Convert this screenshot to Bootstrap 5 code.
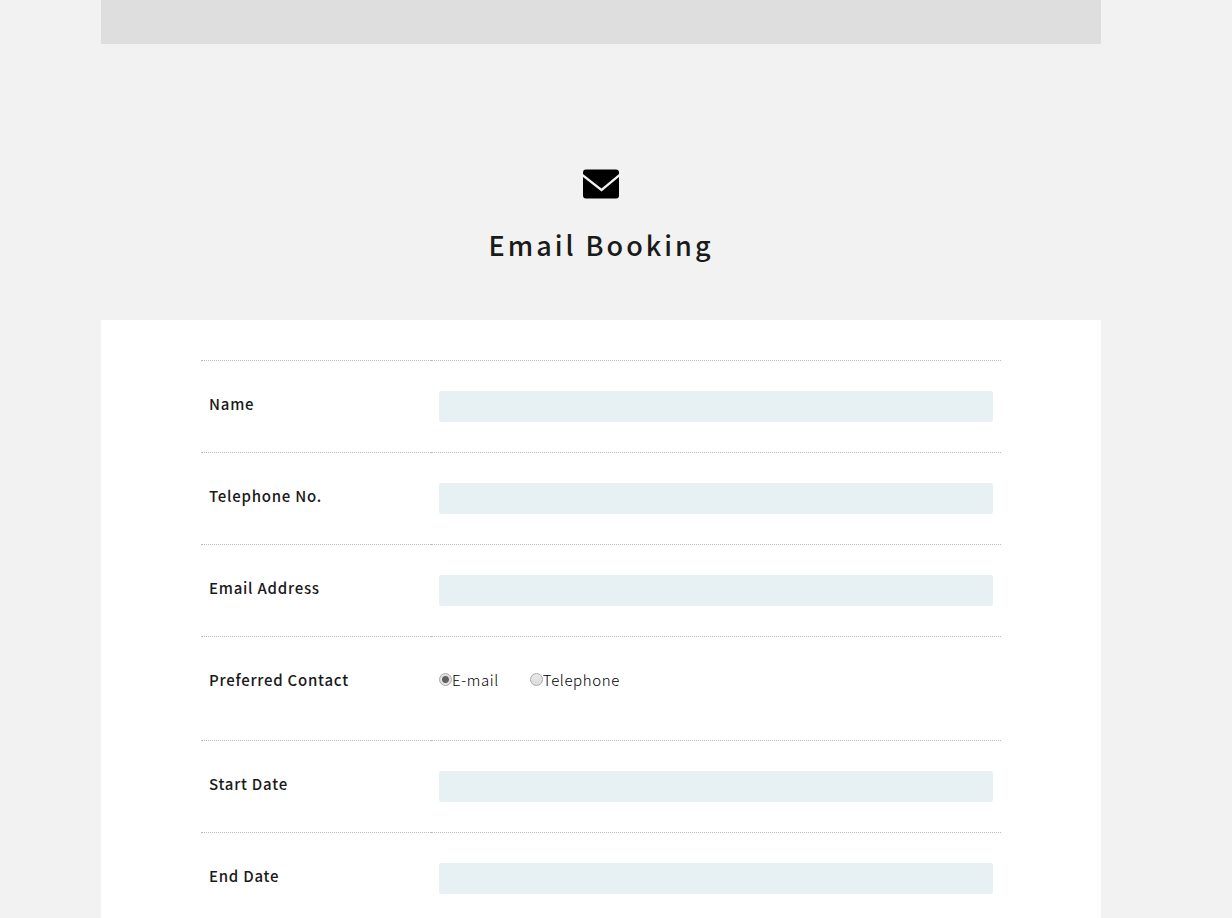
<!DOCTYPE html>
<html lang="en">
<head>
<meta charset="utf-8">
<meta name="viewport" content="width=device-width, initial-scale=1">
<title>Email Booking</title>
<link href="https://cdn.jsdelivr.net/npm/bootstrap@5.3.0/dist/css/bootstrap.min.css" rel="stylesheet">
<style>
  body { background: #f2f2f2; color: #1a1a1a; font-family: "Noto Sans CJK JP", sans-serif; font-size: 15px; line-height: 26px; letter-spacing: 0.05em; padding-right: 30px; }
  .page-column { max-width: 1000px; }
  .previous-panel { background: #dedede; height: 44px; }
  .booking-header { padding: 125px 0 56px; }
  .booking-header svg { width: 36px; height: 30px; }
  .booking-title { font-size: 27px; line-height: 38px; font-weight: 500; letter-spacing: 3px; margin-top: 27px; }
  .booking-panel { padding: 40px 10%; }
  .booking-table { table-layout: fixed; }
  .booking-table th, .booking-table td { border-top: 1px dotted #bbb; padding: 30px 8px; vertical-align: top; }
  .booking-table th { width: 230px; font-weight: 500; padding-bottom: 0; }
  .booking-table .form-control { background: #e7f0f3; height: 31px; border-radius: 3px; }
  .contact-options { height: 43px; gap: 31px; font-weight: 300; color: #000; letter-spacing: 0.04em; }
  .contact-options input { appearance: none; width: 13px; height: 13px; margin-top: -2px; border: 1px solid #aaa; border-radius: 50%; background: linear-gradient(#e9e9e9, #dcdcdc); }
  .contact-options input:checked { background: radial-gradient(circle, #606060 0 3px, #e2e2e2 4px); }
</style>
</head>
<body>
<main class="page-column mx-auto">
  <div class="previous-panel"></div>
  <header class="booking-header text-center">
    <svg class="d-block mx-auto" viewBox="0 0 36 30" aria-hidden="true">
      <path d="M3 .5H33Q36 .5 36 3.5V5L18.500 19.500 0 5V3.500Q0 .5 3 .5Z"/>
      <path d="M0 8L18.500 22.500 36 8V26.500Q36 29.500 33 29.500H3Q0 29.500 0 26.500Z"/>
    </svg>
    <h1 class="booking-title mb-0">Email Booking</h1>
  </header>
  <form class="booking-panel bg-white">
    <table class="booking-table w-100">
      <tbody>
        <tr><th scope="row"><label for="name">Name</label></th><td><input class="form-control border-0" type="text" id="name"></td></tr>
        <tr><th scope="row"><label for="tel">Telephone No.</label></th><td><input class="form-control border-0" type="tel" id="tel"></td></tr>
        <tr><th scope="row"><label for="email">Email Address</label></th><td><input class="form-control border-0" type="email" id="email"></td></tr>
        <tr><th scope="row">Preferred Contact</th><td>
          <div class="contact-options d-flex align-items-start" role="radiogroup" aria-label="Preferred Contact">
            <label class="d-flex align-items-center" for="by-email"><input type="radio" name="contact" id="by-email" checked>E-mail</label>
            <label class="d-flex align-items-center" for="by-tel"><input type="radio" name="contact" id="by-tel">Telephone</label>
          </div></td></tr>
        <tr><th scope="row"><label for="start">Start Date</label></th><td><input class="form-control border-0" type="text" id="start"></td></tr>
        <tr><th scope="row"><label for="end">End Date</label></th><td><input class="form-control border-0" type="text" id="end"></td></tr>
      </tbody>
    </table>
  </form>
</main>
<script src="https://cdn.jsdelivr.net/npm/bootstrap@5.3.0/dist/js/bootstrap.bundle.min.js"></script>
</body>
</html>
